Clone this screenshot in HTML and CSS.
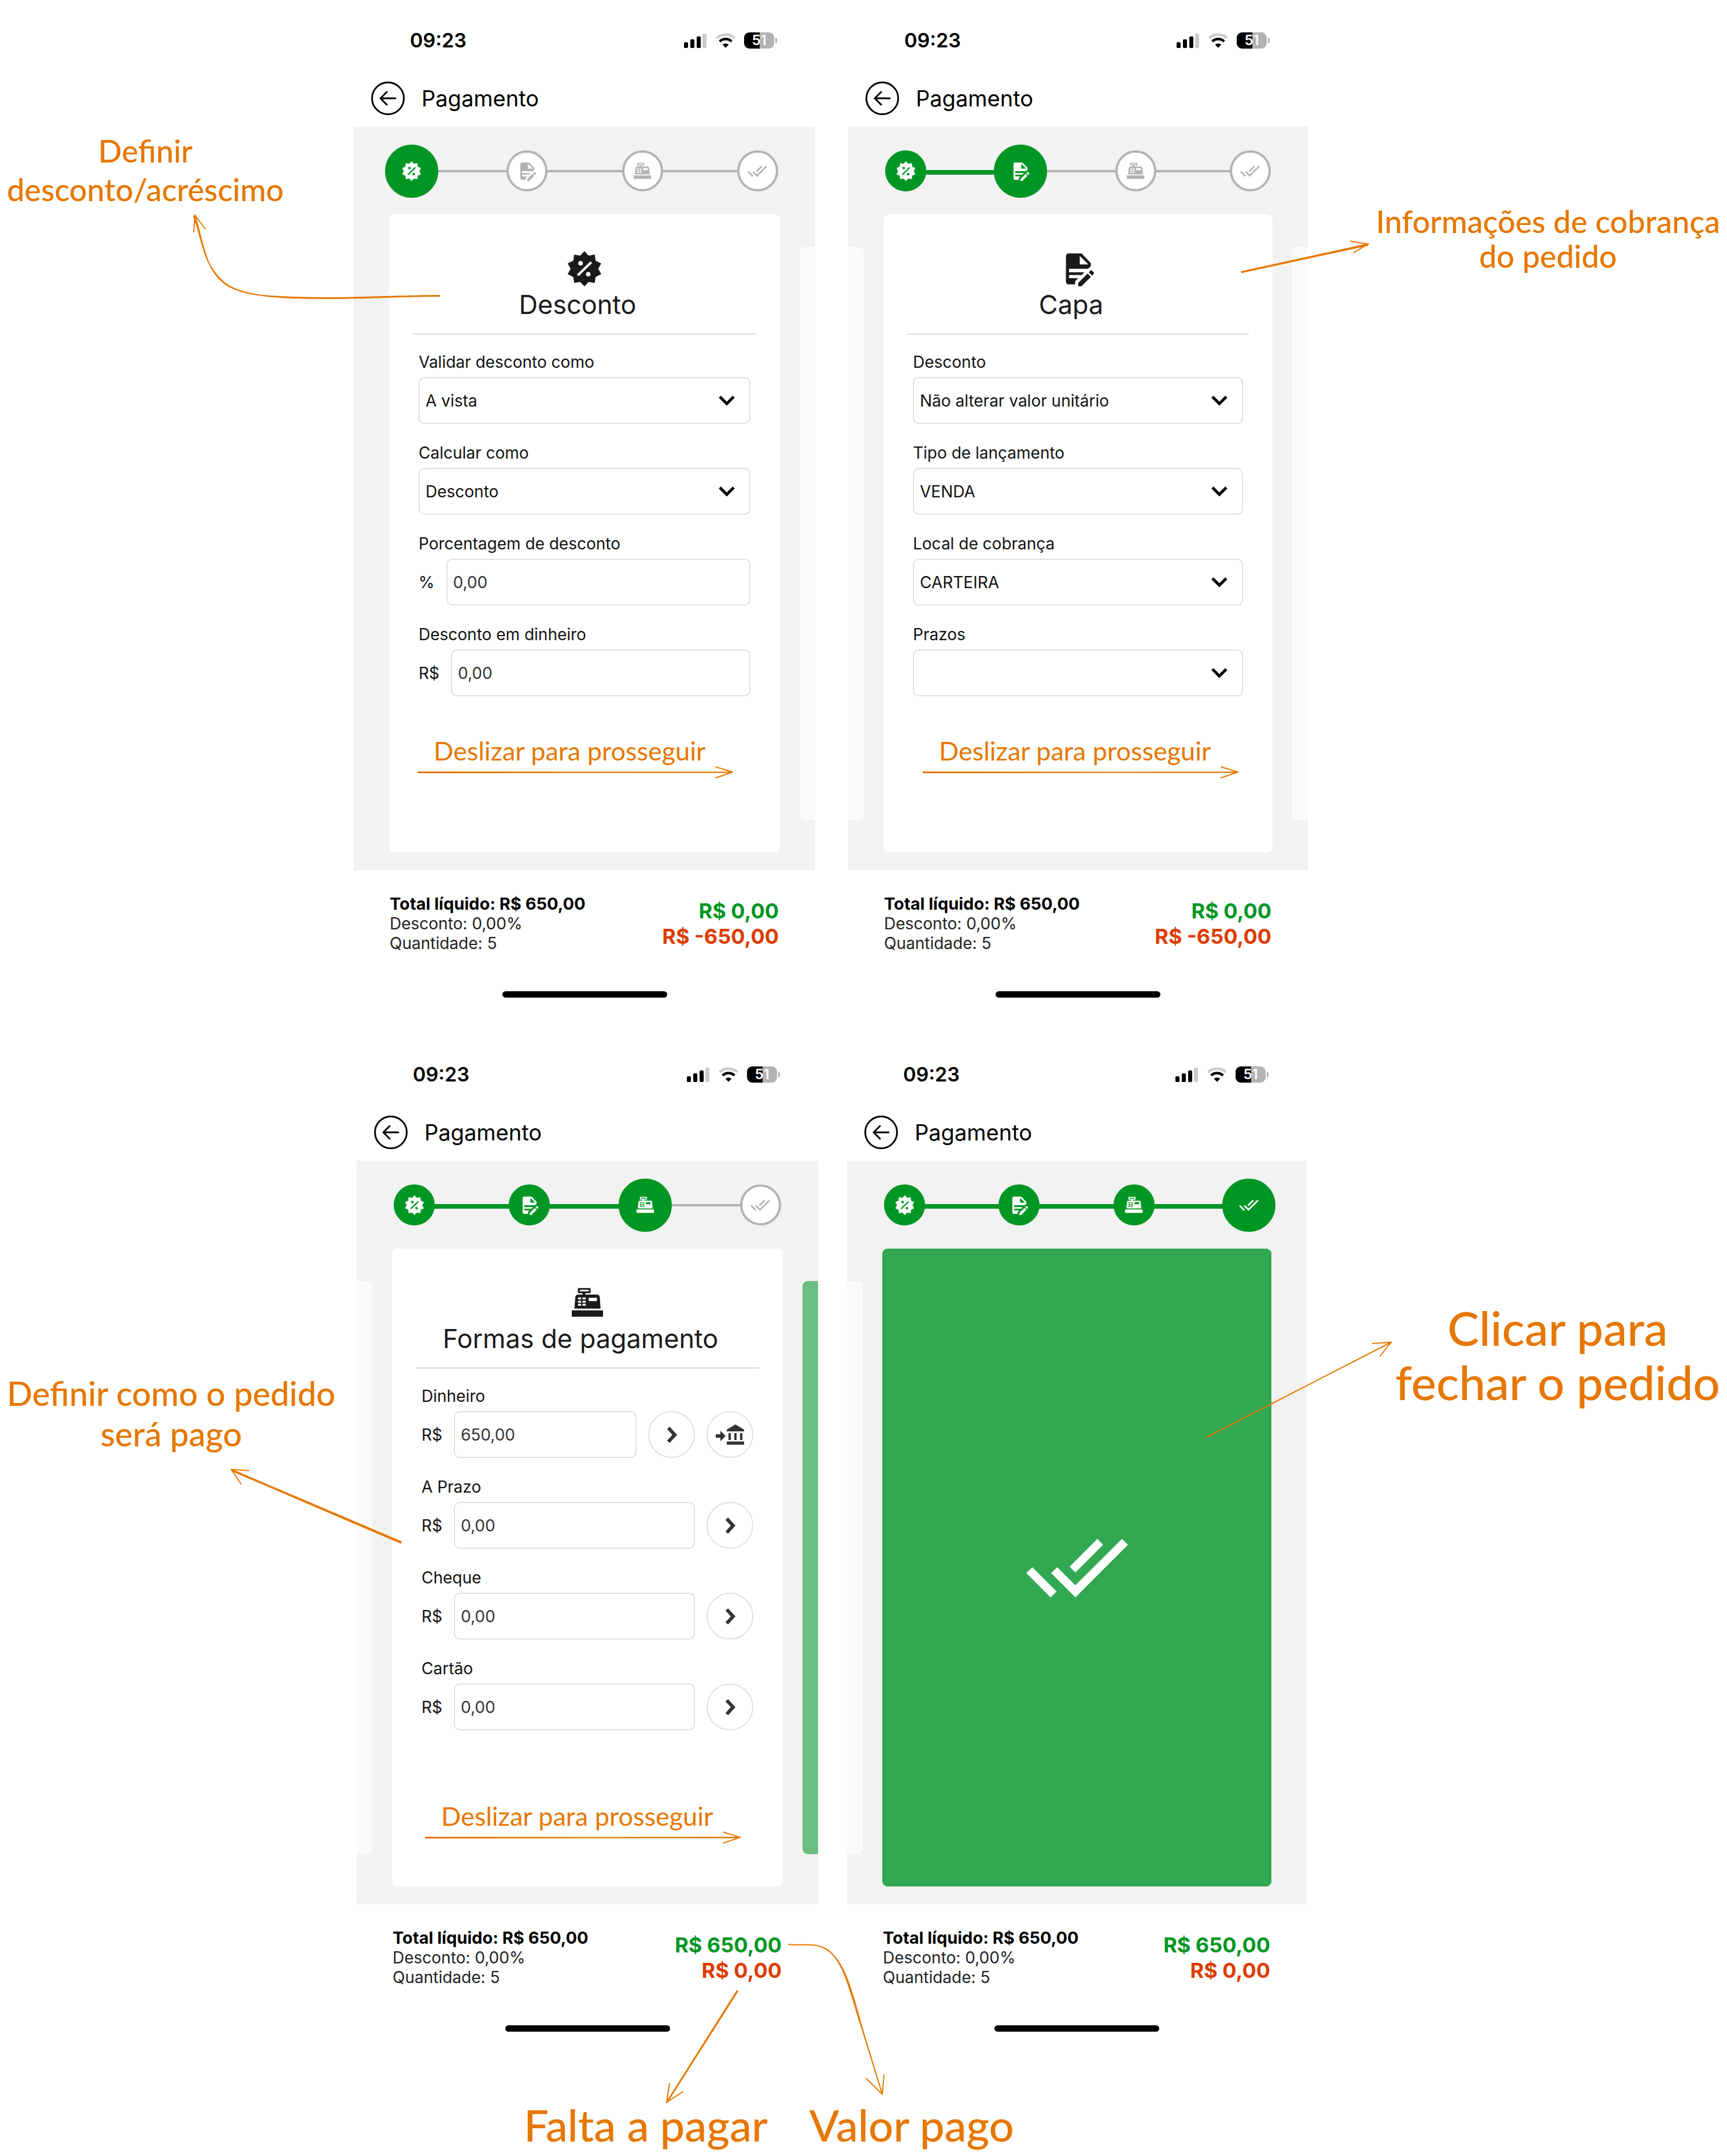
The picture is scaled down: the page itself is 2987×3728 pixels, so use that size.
FILE: index.html
```html
<!DOCTYPE html>
<html lang="pt-BR">
<head>
<meta charset="utf-8">
<meta name="viewport" content="width=device-width, initial-scale=1">
<title>Pagamento</title>
<link rel="stylesheet" href="styles.css">
</head>
<body>
<svg class="sprite" aria-hidden="true">
  <symbol id="i-badge" viewBox="116 69 193 193"><path fill-rule="evenodd" d="M212 73L234 96.500 266 91 270 122.500 299.500 137 284 165 299.500 193 270 207.500 266 239 234 233.500 212 257 190 233.500 158 239 154 207.500 124.500 193 140 165 124.500 137 154 122.500 158 91 190 96.500ZM180 136a12 12 0 1 0 24 0a12 12 0 1 0-24 0ZM220 193a12 12 0 1 0 24 0a12 12 0 1 0-24 0ZM173 194L182 203 252 135 243 126Z"/></symbol>
  <symbol id="i-doc" viewBox="95 70 193 193"><path fill-rule="evenodd" d="M143 86H209L257 136V152L242 166H143V184H223L209 198H143V215H191L175 231V247H143Q127 247 127 231V102Q127 86 143 86ZM199 99V143H244Z"/><path d="M191 257V240L240 191 257 208 208 257ZM246 184L254 176Q259 172 264 176L271 184Q275 189 271 194L263 201Z"/></symbol>
  <symbol id="i-register" viewBox="131 93 193 193"><path fill-rule="evenodd" d="M146 228H309V261H146ZM160 219L164 160Q166 146 180 146H202V138H178V112H244V138H217V146H276Q290 146 292 160L296 219ZM188 121V129H235V121ZM178 161V171H195V161ZM202 161V171H219V161ZM178 178V188H195V178ZM202 178V188H219V178ZM178 194V204H195V194ZM202 194V204H219V194ZM234 162V180H277V162Z"/></symbol>
  <symbol id="i-check" viewBox="-6 -44 188 188"><path d="M0 59L10.500 49 52.500 91 42 101ZM43 59L53.500 49 85 80 165.500 0 176 10 85 101ZM123 0L133 10 85 58 75 48Z"/></symbol>
  <symbol id="i-down" viewBox="0 0 30 20"><path d="M3 3L15 15 27 3" fill="none" stroke="currentColor" stroke-width="5"/></symbol>
  <symbol id="i-next" viewBox="0 0 20 30"><path d="M4 3L15 15 4 27" fill="none" stroke="currentColor" stroke-width="6"/></symbol>
  <symbol id="i-bank" viewBox="0 0 50 36"><path d="M0 17H8V11L17 20 8 29V23H0ZM34 0L49 9V12H19V9ZM22 15H26V27H22ZM32 15H36V27H32ZM42 15H46V27H42ZM19 29.500H49V35H19Z"/></symbol>
  <symbol id="i-back" viewBox="0 0 30 26"><path d="M28 13H2M13 2L2 13 13 24" fill="none" stroke="currentColor" stroke-width="3" stroke-linecap="round" stroke-linejoin="round"/></symbol>
  <symbol id="i-signal" viewBox="0 0 40 27"><rect x="0" y="16" width="7" height="10" rx="2"/><rect x="11" y="11" width="7" height="15" rx="2"/><rect x="22" y="6" width="7" height="20" rx="2"/><rect x="32" y="1" width="7" height="25" rx="2" fill="#ccc"/></symbol>
  <symbol id="i-wifi" viewBox="204 76 108 84"><path d="M212 105A69 69 0 0 1 304 105" fill="none" stroke="#ccc" stroke-width="14"/><path d="M227 123A45 45 0 0 1 289 123" fill="none" stroke="currentColor" stroke-width="14"/><path d="M258 156L242 140A24 24 0 0 1 274 140Z"/></symbol>
  <symbol id="i-slide" viewBox="0 0 546 24"><path d="M1 12L545 12.500M1 13L545 12M516 3L545 12 516 22" fill="none" stroke="currentColor" stroke-width="2" stroke-linecap="round"/></symbol>
</svg>

<main class="board">
  <section class="row row--first">
    <aside class="note note--left note--discount">Definir<br>desconto/acréscimo</aside>

    <article class="phone phone--a">
      <div class="status"><time>09:23</time><span class="status-icons"><svg class="signal"><use href="#i-signal"/></svg><svg class="wifi"><use href="#i-wifi"/></svg><span class="battery">51</span></span></div>
      <header class="header"><button class="back" aria-label="Voltar"><svg><use href="#i-back"/></svg></button><h1>Pagamento</h1></header>
      <div class="stage">
        <div class="stepper">
          <span class="step step--current"><svg><use href="#i-badge"/></svg></span><i class="line"></i>
          <span class="step"><svg><use href="#i-doc"/></svg></span><i class="line"></i>
          <span class="step"><svg><use href="#i-register"/></svg></span><i class="line"></i>
          <span class="step"><svg><use href="#i-check"/></svg></span>
        </div>
        <div class="carousel">
          <div class="peek peek--none"></div>
          <form class="card">
            <svg class="card-icon"><use href="#i-badge"/></svg>
            <h2>Desconto</h2>
            <hr>
            <div class="field"><label for="validar">Validar desconto como</label><div class="select"><select id="validar"><option>A vista</option></select><svg><use href="#i-down"/></svg></div></div>
            <div class="field"><label for="calcular">Calcular como</label><div class="select"><select id="calcular"><option>Desconto</option></select><svg><use href="#i-down"/></svg></div></div>
            <div class="field"><label for="pct">Porcentagem de desconto</label><div class="control"><span>%</span><input id="pct" value="0,00"></div></div>
            <div class="field"><label for="valor">Desconto em dinheiro</label><div class="control"><span>R$</span><input id="valor" value="0,00"></div></div>
            <div class="hint"><p>Deslizar para prosseguir</p><svg><use href="#i-slide"/></svg></div>
          </form>
          <div class="peek peek--right"></div>
        </div>
      </div>
      <footer class="summary"><div class="totals"><strong>Total líquido: R$ 650,00</strong><span>Desconto: 0,00%</span><span>Quantidade: 5</span></div><div class="amounts"><span class="paid">R$ 0,00</span><span class="due">R$ -650,00</span></div></footer>
      <div class="home"></div>
    </article>

    <article class="phone phone--b">
      <div class="status"><time>09:23</time><span class="status-icons"><svg class="signal"><use href="#i-signal"/></svg><svg class="wifi"><use href="#i-wifi"/></svg><span class="battery">51</span></span></div>
      <header class="header"><button class="back" aria-label="Voltar"><svg><use href="#i-back"/></svg></button><h1>Pagamento</h1></header>
      <div class="stage">
        <div class="stepper">
          <span class="step step--done"><svg><use href="#i-badge"/></svg></span><i class="line line--done"></i>
          <span class="step step--current"><svg><use href="#i-doc"/></svg></span><i class="line"></i>
          <span class="step"><svg><use href="#i-register"/></svg></span><i class="line"></i>
          <span class="step"><svg><use href="#i-check"/></svg></span>
        </div>
        <div class="carousel">
          <div class="peek peek--left"></div>
          <form class="card">
            <svg class="card-icon"><use href="#i-doc"/></svg>
            <h2>Capa</h2>
            <hr>
            <div class="field"><label for="desc">Desconto</label><div class="select"><select id="desc"><option>Não alterar valor unitário</option></select><svg><use href="#i-down"/></svg></div></div>
            <div class="field"><label for="tipo">Tipo de lançamento</label><div class="select"><select id="tipo"><option>VENDA</option></select><svg><use href="#i-down"/></svg></div></div>
            <div class="field"><label for="local">Local de cobrança</label><div class="select"><select id="local"><option>CARTEIRA</option></select><svg><use href="#i-down"/></svg></div></div>
            <div class="field"><label for="prazos">Prazos</label><div class="select"><select id="prazos"><option></option></select><svg><use href="#i-down"/></svg></div></div>
            <div class="hint hint--inset"><p>Deslizar para prosseguir</p><svg><use href="#i-slide"/></svg></div>
          </form>
          <div class="peek peek--right"></div>
        </div>
      </div>
      <footer class="summary"><div class="totals"><strong>Total líquido: R$ 650,00</strong><span>Desconto: 0,00%</span><span>Quantidade: 5</span></div><div class="amounts"><span class="paid">R$ 0,00</span><span class="due">R$ -650,00</span></div></footer>
      <div class="home"></div>
    </article>

    <aside class="note note--right note--cover">Informações de cobrança<br>do pedido</aside>
  </section>

  <section class="row row--second">
    <aside class="note note--left note--methods">Definir como o pedido<br>será pago</aside>

    <article class="phone phone--a">
      <div class="status"><time>09:23</time><span class="status-icons"><svg class="signal"><use href="#i-signal"/></svg><svg class="wifi"><use href="#i-wifi"/></svg><span class="battery">51</span></span></div>
      <header class="header"><button class="back" aria-label="Voltar"><svg><use href="#i-back"/></svg></button><h1>Pagamento</h1></header>
      <div class="stage">
        <div class="stepper">
          <span class="step step--done"><svg><use href="#i-badge"/></svg></span><i class="line line--done"></i>
          <span class="step step--done"><svg><use href="#i-doc"/></svg></span><i class="line line--done"></i>
          <span class="step step--current"><svg><use href="#i-register"/></svg></span><i class="line"></i>
          <span class="step"><svg><use href="#i-check"/></svg></span>
        </div>
        <div class="carousel">
          <div class="peek peek--left"></div>
          <form class="card">
            <svg class="card-icon"><use href="#i-register"/></svg>
            <h2>Formas de pagamento</h2>
            <hr>
            <div class="field"><label for="dinheiro">Dinheiro</label><div class="control"><span>R$</span><input id="dinheiro" value="650,00"><button type="button" class="round" aria-label="Avançar"><svg class="next"><use href="#i-next"/></svg></button><button type="button" class="round" aria-label="Banco"><svg class="bank"><use href="#i-bank"/></svg></button></div></div>
            <div class="field"><label for="aprazo">A Prazo</label><div class="control"><span>R$</span><input id="aprazo" value="0,00"><button type="button" class="round" aria-label="Avançar"><svg class="next"><use href="#i-next"/></svg></button></div></div>
            <div class="field"><label for="cheque">Cheque</label><div class="control"><span>R$</span><input id="cheque" value="0,00"><button type="button" class="round" aria-label="Avançar"><svg class="next"><use href="#i-next"/></svg></button></div></div>
            <div class="field"><label for="cartao">Cartão</label><div class="control"><span>R$</span><input id="cartao" value="0,00"><button type="button" class="round" aria-label="Avançar"><svg class="next"><use href="#i-next"/></svg></button></div></div>
            <div class="hint hint--low"><p>Deslizar para prosseguir</p><svg><use href="#i-slide"/></svg></div>
          </form>
          <div class="peek peek--right peek--green"></div>
        </div>
      </div>
      <footer class="summary"><div class="totals"><strong>Total líquido: R$ 650,00</strong><span>Desconto: 0,00%</span><span>Quantidade: 5</span></div><div class="amounts"><span class="paid">R$ 650,00</span><span class="due">R$ 0,00</span></div></footer>
      <div class="home"></div>
    </article>

    <article class="phone phone--b">
      <div class="status"><time>09:23</time><span class="status-icons"><svg class="signal"><use href="#i-signal"/></svg><svg class="wifi"><use href="#i-wifi"/></svg><span class="battery">51</span></span></div>
      <header class="header"><button class="back" aria-label="Voltar"><svg><use href="#i-back"/></svg></button><h1>Pagamento</h1></header>
      <div class="stage">
        <div class="stepper">
          <span class="step step--done"><svg><use href="#i-badge"/></svg></span><i class="line line--done"></i>
          <span class="step step--done"><svg><use href="#i-doc"/></svg></span><i class="line line--done"></i>
          <span class="step step--done"><svg><use href="#i-register"/></svg></span><i class="line line--done"></i>
          <span class="step step--current"><svg><use href="#i-check"/></svg></span>
        </div>
        <div class="carousel">
          <div class="peek peek--left"></div>
          <button class="card card--confirm" aria-label="Fechar pedido"><svg><use href="#i-check"/></svg></button>
          <div class="peek peek--none"></div>
        </div>
      </div>
      <footer class="summary"><div class="totals"><strong>Total líquido: R$ 650,00</strong><span>Desconto: 0,00%</span><span>Quantidade: 5</span></div><div class="amounts"><span class="paid">R$ 650,00</span><span class="due">R$ 0,00</span></div></footer>
      <div class="home"></div>
    </article>

    <aside class="note note--right note--close">Clicar para<br>fechar o pedido</aside>
  </section>

  <div class="captions"><span>Falta a pagar</span><span>Valor pago</span></div>

  <svg class="arrows" viewBox="0 0 2987 3728" aria-hidden="true">
    <path d="M760 511C700 511 640 515 561 515C480 514 420 514 388 490C352 462 350 410 337 372M760 512C690 512 640 516 561 516C480 516 415 512 387 488C350 455 352 420 335 374M335 401L337 372 355 396"/>
    <path d="M2147 470L2366 422M2148 471L2366 424M2336 417L2366 422 2341 437"/>
    <path d="M694 2666L400 2541M693 2668L401 2543M430 2543L400 2541 417 2566"/>
    <path d="M2087 2485L2406 2321M2374 2323L2406 2321 2387 2345"/>
    <path d="M1275 3442L1153 3635M1276 3443L1154 3635M1158 3603L1153 3635 1181 3617"/>
    <path d="M1364 3362C1390 3365 1405 3359 1425 3368C1460 3385 1470 3445 1490 3505L1526 3621M1425 3368C1462 3387 1475 3450 1492 3510L1526 3621M1498 3594L1526 3621 1529 3588"/>
  </svg>
</main>
</body>
</html>
```

FILE: styles.css
```css
* { box-sizing: border-box; }
body { margin: 0; background: #fff; color: #111; font-family: Inter, "Liberation Sans", sans-serif; font-size: 28px; line-height: 34px; }
button, input, select { font: inherit; color: inherit; }
svg { display: block; fill: currentColor; }
h1, h2, p { margin: 0; font-weight: 400; }
.sprite { position: absolute; width: 0; height: 0; }

.board { position: relative; }
.row { display: grid; }
.row--first { grid-template-columns: minmax(0, 612fr) minmax(0, 798fr) minmax(0, 57fr) minmax(0, 795fr) minmax(0, 725fr); }
.row--second { grid-template-columns: minmax(0, 617fr) minmax(0, 798fr) minmax(0, 50fr) minmax(0, 795fr) minmax(0, 727fr); }
.note--left { grid-column: 1; }
.phone--a { grid-column: 2; }
.phone--b { grid-column: 4; }
.note--right { grid-column: 5; }

/* Handwritten callouts */
.note, .captions, .hint { color: #e67700; font-family: Virgil, Lato, sans-serif; font-weight: 500; }
.note { text-align: center; white-space: nowrap; }
.note--left { justify-self: start; padding-left: 12px; }
.note--right { justify-self: end; padding-right: 12px; }
.note--discount { padding-top: 227px; font-size: 54px; line-height: 67px; }
.note--cover { padding-top: 353px; font-size: 54px; line-height: 60px; }
.note--methods { padding-top: 586px; font-size: 58px; line-height: 70px; }
.note--close { padding-top: 460px; font-size: 82px; line-height: 94px; }
.captions { display: flex; gap: 72px; padding: 53px 0 9px 906px; font-size: 76px; line-height: 90px; }
.arrows { position: absolute; inset: 0; width: 100%; height: 100%; fill: none; stroke: #e67700; stroke-width: 2; stroke-linecap: round; pointer-events: none; }

/* Phone chrome */
.status { display: flex; justify-content: space-between; align-items: center; height: 140px; padding: 0 66px 0 97px; color: #000; font-size: 34px; font-weight: 600; }
.status-icons { display: flex; align-items: center; gap: 14px; }
.signal { width: 40px; height: 27px; }
.wifi { width: 36px; height: 28px; }
.battery { position: relative; width: 52px; margin-right: 5px; border-radius: 9px; background: linear-gradient(90deg, #000 51%, #b3b3b3 51%); color: #fff; font-size: 24px; line-height: 28px; text-align: center; }
.battery::after { content: ""; position: absolute; right: -5px; top: 9px; width: 3px; height: 10px; border-radius: 0 3px 3px 0; background: #b3b3b3; }
.header { display: flex; align-items: center; gap: 29px; height: 60px; margin-bottom: 19px; padding-left: 30px; color: #000; }
.header h1 { font-size: 38px; line-height: 48px; }
.back { display: grid; place-items: center; width: 58px; height: 58px; padding: 0; border: 3px solid #000; border-radius: 50%; background: none; }
.back svg { width: 30px; height: 26px; }

/* Stepper */
.stage { padding: 31px 0; background: #f2f2f2; }
.stepper { display: flex; height: 92px; margin-bottom: 29px; padding: 0 54px; }
.step { position: relative; z-index: 1; display: grid; place-items: center; width: 71px; height: 71px; margin: 10px; border: 4px solid #b3b3b3; border-radius: 50%; background: #fff; color: #b3b3b3; }
.step svg { width: 36px; height: 36px; }
.step--done, .step--current { border-color: #009624; background: #009624; color: #fff; }
.step--current { width: 92px; height: 92px; margin: 0; }
.line { flex: 1; height: 4px; margin: 44px -16px 0; background: #b3b3b3; }
.line--done { height: 8px; background: #009624; }

/* Cards */
.carousel { display: flex; gap: 34px; }
.peek { width: 27px; margin: 56px 0; background: #fbfbfb; }
.peek--left { border-radius: 0 9px 9px 0; }
.peek--right { border-radius: 9px 0 0 9px; }
.peek--green { background: #6bbd82; }
.peek--none { background: none; }
.card { flex: 1; min-width: 0; min-height: 1103px; padding: 62px 41px 0; border: 0; border-radius: 9px; background: #fff; }
.card-icon { width: 64px; height: 64px; margin: 0 auto; color: #1a1a1a; }
.card h2 { margin-top: 2px; padding-right: 24px; color: #1a1a1a; font-size: 45px; line-height: 56px; text-align: center; }
.card hr { height: 3px; margin: 21px 0 30px; border: 0; background: #e5e5e5; }
.card--confirm { display: grid; place-items: center; padding: 0; background: #32a852; color: #fff; }
.card--confirm svg { width: 188px; height: 188px; }

.field { margin: 0 10px 33px; }
.field label { display: block; margin-bottom: 9px; }
.control { display: flex; align-items: center; gap: 20px; }
.control input, .select select { height: 81px; border: 2px solid #e0e0e0; border-radius: 10px; background: #fff; }
.control input { flex: 1; min-width: 0; padding: 0 10px; color: #333; }
.select { position: relative; }
.select select { width: 100%; padding: 0 10px; appearance: none; color: #111; }
.select svg { position: absolute; right: 26px; top: 31px; width: 30px; height: 20px; color: #000; pointer-events: none; }
.round { display: grid; place-items: center; width: 81px; height: 81px; padding: 0; border: 2px solid #e0e0e0; border-radius: 50%; background: #fff; color: #333; }
.next { width: 20px; height: 30px; }
.bank { width: 50px; height: 36px; }

.hint { width: 546px; margin: 69px 0 0 8px; }
.hint--inset { margin-left: 27px; }
.hint--low { margin: 123px 0 0 16px; }
.hint p { padding-left: 28px; font-size: 45px; line-height: 50px; white-space: nowrap; }
.hint svg { width: 100%; height: 24px; }

/* Order summary */
.summary { display: flex; justify-content: space-between; padding: 41px 63px 0 62px; color: #222; }
.totals, .amounts { display: flex; flex-direction: column; }
.totals strong { color: #000; font-size: 29px; font-weight: 700; }
.amounts { padding-top: 7px; font-size: 36px; font-weight: 700; line-height: 44px; text-align: right; }
.paid { color: #009624; }
.due { color: #dd3c00; }
.home { width: 285px; height: 11px; margin: 66px auto 63px; border-radius: 6px; background: #000; }
```
